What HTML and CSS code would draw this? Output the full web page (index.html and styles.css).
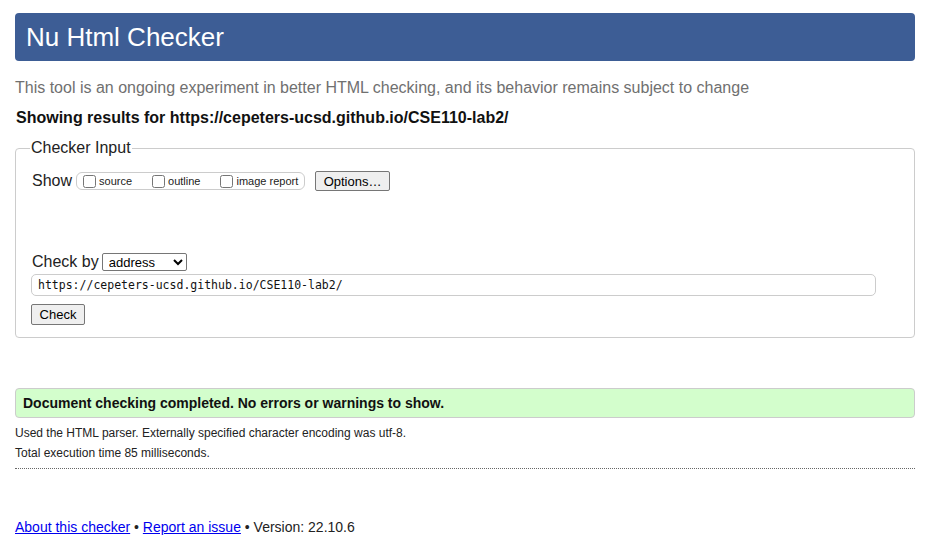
FILE: index.html
```html
<!DOCTYPE html>
<html>
<head>
<meta charset="utf-8">
<link rel="stylesheet" href="styles.css">
</head>
<body>
<h1 class="title">Nu Html Checker</h1>
<p class="tagline">This tool is an ongoing experiment in better HTML checking, and its behavior remains subject to change</p>
<p class="showing">Showing results for https://cepeters-ucsd.github.io/CSE110-lab2/</p>
<fieldset class="input">
  <legend class="legend">Checker Input</legend>
  <div class="show-row">
    <span class="lbl">Show</span>
    <span class="opts">
      <label class="opt"><input type="checkbox" class="cb">source</label>
      <label class="opt"><input type="checkbox" class="cb">outline</label>
      <label class="opt"><input type="checkbox" class="cb">image report</label>
    </span>
    <button class="btn options">Options…</button>
  </div>
  <div class="by-row">
    <span class="lbl">Check by</span>
    <select class="sel"><option>address</option></select>
  </div>
  <input class="url" type="text" value="https://cepeters-ucsd.github.io/CSE110-lab2/">
  <div class="check-row"><button class="btn check">Check</button></div>
</fieldset>
<div class="success">Document checking completed. No errors or warnings to show.</div>
<p class="info first">Used the HTML parser. Externally specified character encoding was utf-8.</p>
<p class="info">Total execution time 85 milliseconds.</p>
<hr class="sep">
<p class="footer"><a href="#">About this checker</a> • <a href="#">Report an issue</a> • Version: 22.10.6</p>
</body>
</html>
```
FILE: styles.css
```css
html, body { margin: 0; padding: 0; background: #fff; }
body {
  font-family: "Liberation Sans", Arial, sans-serif;
  color: #222;
  padding: 13px 15px 0 15px;
  width: 900px;
}
.title {
  margin: 0;
  height: 48px;
  box-sizing: border-box;
  background: #3d5d95;
  color: #fff;
  border-radius: 4px;
  font-weight: normal;
  font-size: 26px;
  line-height: 48px;
  padding-left: 11px;
}
.tagline {
  margin: 17px 0 0 0;
  color: #707070;
  font-size: 16px;
  line-height: 20px;
}
.showing {
  margin: 10px 0 0 1px;
  font-weight: bold;
  font-size: 16px;
  line-height: 20px;
  color: #111;
}
.input {
  margin: 11px 0 0 0;
  border: 1px solid #ccc;
  border-radius: 4px;
  padding: 13px 15px 12px 15px;
}
.legend {
  font-size: 16px;
  padding: 0 1px;
  color: #222;
  margin-left: -1px;
}
.lbl { font-size: 16px; }
.show-row {
  display: flex;
  align-items: center;
  margin-left: 1px;
  height: 22px;
}
.opts {
  display: inline-flex;
  align-items: center;
  border: 1px solid #ccc;
  border-radius: 6px;
  width: 229px;
  margin-left: 4px;
  padding: 0 0 0 6px;
  gap: 20px;
  box-sizing: border-box;
  height: 18px;
}
.opt {
  display: inline-flex;
  align-items: center;
  font-size: 11px;
  color: #222;
}
.cb {
  width: 13px;
  height: 13px;
  margin: 0 3px 0 0;
}
.btn {
  font-family: "Liberation Sans", Arial, sans-serif;
  font-size: 13px;
  background: #efefef;
  border: 1px solid #767676;
  border-radius: 2px;
  color: #000;
  padding: 0 6px;
}
.options {
  height: 20px;
  margin-left: 10px;
  width: 75px;
}
.by-row {
  display: flex;
  align-items: center;
  margin-top: 59px;
  margin-left: 1px;
  height: 22px;
}
.sel {
  margin-left: 3px;
  height: 18px;
  width: 85px;
  font-family: "Liberation Sans", Arial, sans-serif;
  font-size: 13px;
  border: 1px solid #767676;
  border-radius: 2px;
  background: #fff;
  padding: 0 2px;
}
.url {
  display: block;
  margin: 1px 0 0 0;
  width: 845px;
  height: 22px;
  box-sizing: border-box;
  border: 1px solid #ccc;
  border-radius: 5px;
  font-family: "DejaVu Sans Mono", "Liberation Mono", monospace;
  font-size: 11.5px;
  padding: 0 6px;
  color: #111;
}
.check-row { margin-top: 8px; height: 21px; }
.check {
  height: 21px;
  width: 54px;
}
.success {
  margin-top: 50px;
  height: 30px;
  box-sizing: border-box;
  background: #d3fecc;
  border: 1px solid #ccc;
  border-radius: 4px;
  font-weight: bold;
  font-size: 14px;
  line-height: 28px;
  padding-left: 7px;
  color: #111;
}
.info {
  margin: 0;
  font-size: 12px;
  line-height: 20px;
  color: #222;
}
.info.first { margin-top: 5px; }
.sep {
  margin: 5px 0 0 0;
  border: 0;
  border-top: 1px dotted #666;
  height: 0;
}
.footer {
  margin: 49px 0 0 0;
  font-size: 14px;
  line-height: 18px;
  color: #222;
}
.footer a { color: #00e; }
```
